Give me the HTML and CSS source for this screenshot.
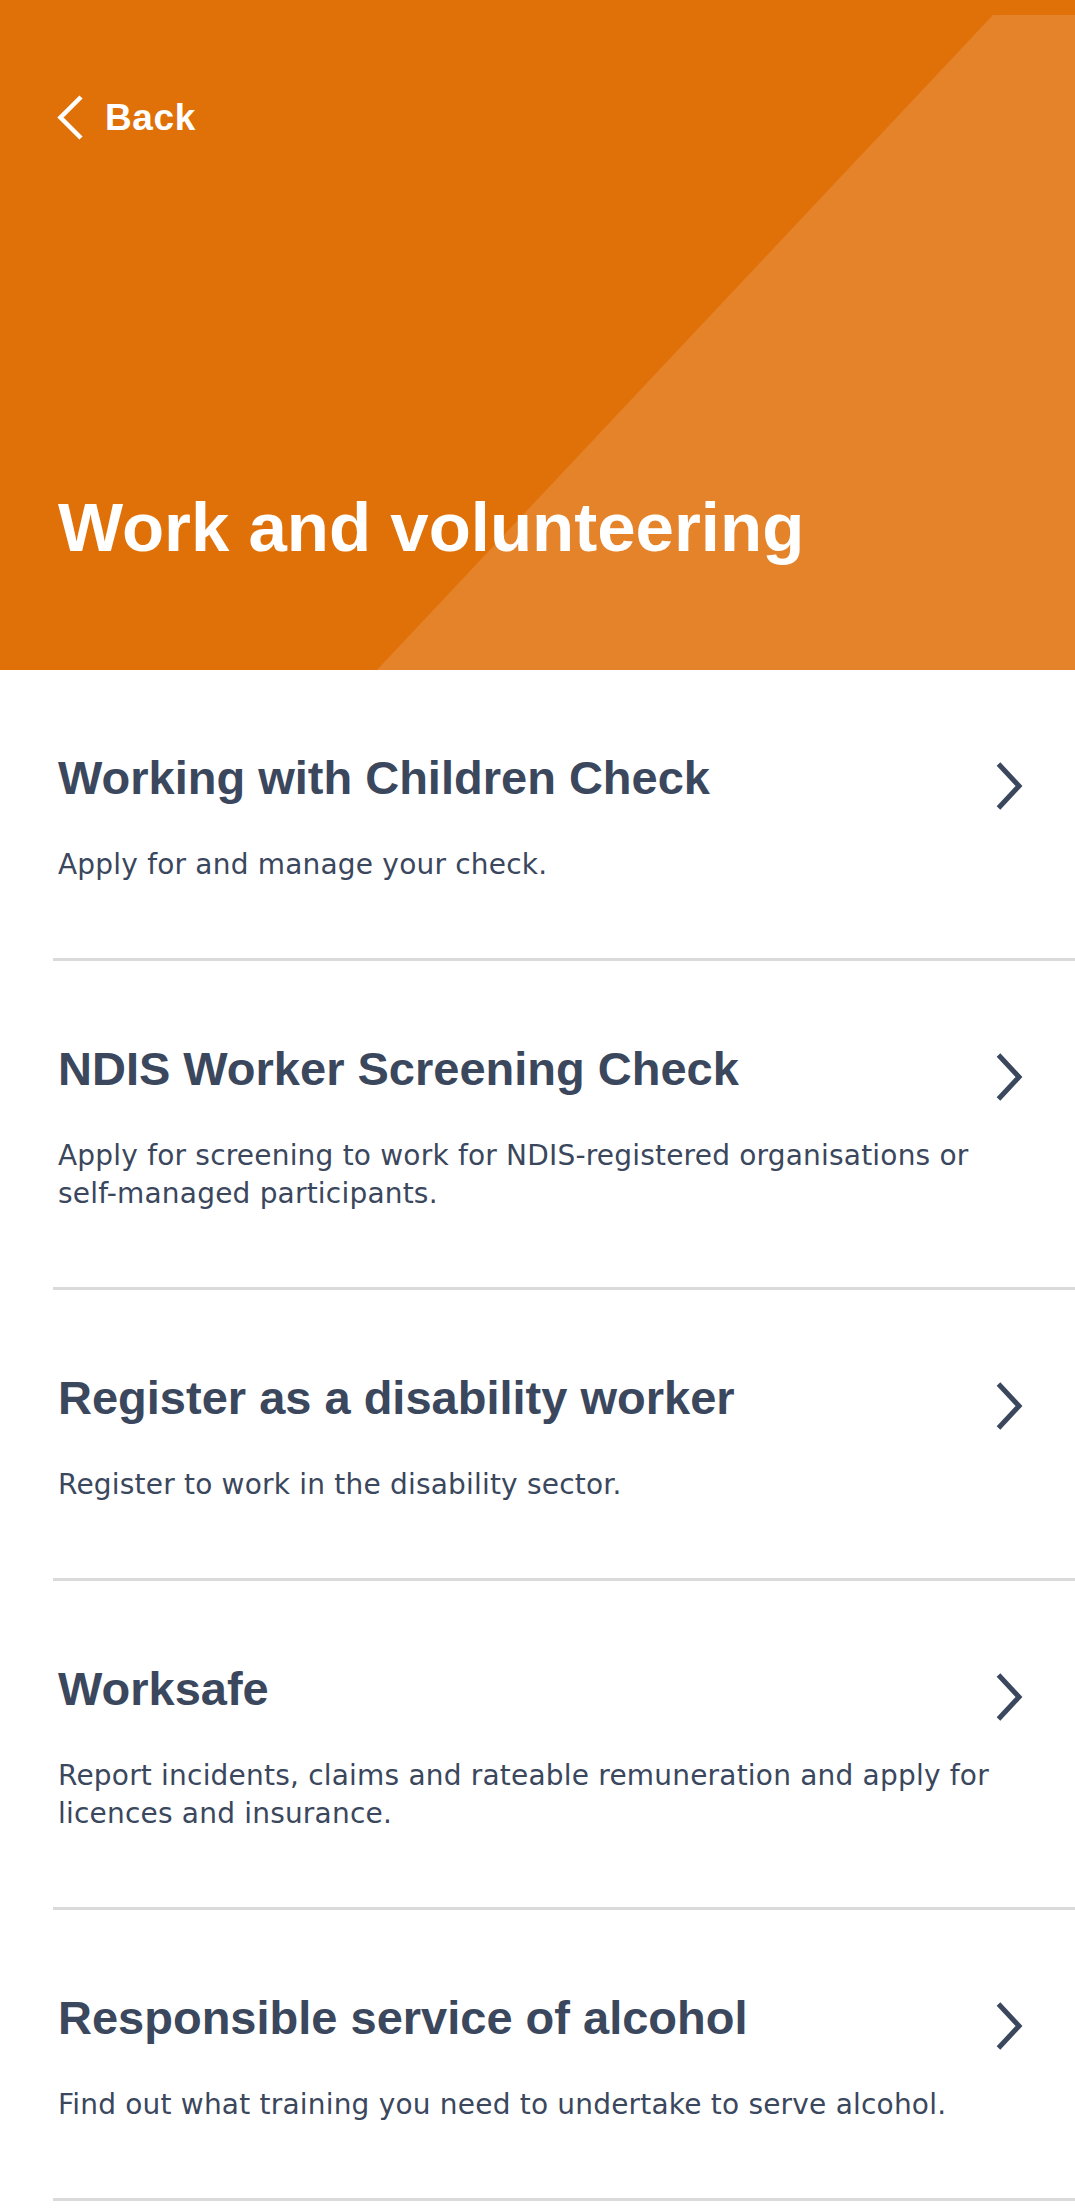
FILE: index.html
```html
<!DOCTYPE html>
<html lang="en">
<head>
<meta charset="utf-8">
<title>Work and volunteering</title>
<link rel="stylesheet" href="styles.css">
</head>
<body>
<header class="hero">
  <a class="back" href="#">
    <svg class="back-icon" width="28" height="48" viewBox="0 0 28 48" aria-hidden="true"><path d="M23 3 L2.5 23.5 L23 44"/></svg>
    <span class="back-label">Back</span>
  </a>
  <h1 class="hero-title">Work and volunteering</h1>
</header>
<ul class="list">
  <li class="item">
    <div class="item-head">
      <h2 class="item-title">Working with Children Check</h2>
      <svg class="chev" width="32" height="52" viewBox="0 0 32 52" aria-hidden="true"><path d="M3.5 4 L24 26 L3.5 48"/></svg>
    </div>
    <p class="item-desc">Apply for and manage your check.</p>
  </li>
  <li class="item">
    <div class="item-head">
      <h2 class="item-title">NDIS Worker Screening Check</h2>
      <svg class="chev" width="32" height="52" viewBox="0 0 32 52" aria-hidden="true"><path d="M3.5 4 L24 26 L3.5 48"/></svg>
    </div>
    <p class="item-desc">Apply for screening to work for NDIS-registered organisations or self-managed participants.</p>
  </li>
  <li class="item">
    <div class="item-head">
      <h2 class="item-title">Register as a disability worker</h2>
      <svg class="chev" width="32" height="52" viewBox="0 0 32 52" aria-hidden="true"><path d="M3.5 4 L24 26 L3.5 48"/></svg>
    </div>
    <p class="item-desc">Register to work in the disability sector.</p>
  </li>
  <li class="item">
    <div class="item-head">
      <h2 class="item-title">Worksafe</h2>
      <svg class="chev" width="32" height="52" viewBox="0 0 32 52" aria-hidden="true"><path d="M3.5 4 L24 26 L3.5 48"/></svg>
    </div>
    <p class="item-desc">Report incidents, claims and rateable remuneration and apply for licences and insurance.</p>
  </li>
  <li class="item">
    <div class="item-head">
      <h2 class="item-title">Responsible service of alcohol</h2>
      <svg class="chev" width="32" height="52" viewBox="0 0 32 52" aria-hidden="true"><path d="M3.5 4 L24 26 L3.5 48"/></svg>
    </div>
    <p class="item-desc">Find out what training you need to undertake to serve alcohol.</p>
  </li>
</ul>
</body>
</html>
```

FILE: styles.css
```css
html, body {
  margin: 0;
  padding: 0;
  background: #ffffff;
}

body {
  font-family: "Liberation Sans", Arial, sans-serif;
  color: #3a475d;
}

.hero {
  position: relative;
  box-sizing: border-box;
  height: 670px;
  padding: 94px 0 0 58px;
  background: #e07109;
  overflow: hidden;
}

.hero::before {
  content: "";
  position: absolute;
  left: 0;
  top: 0;
  right: 0;
  bottom: 0;
  background: #e5832a;
  clip-path: polygon(993px 15px, 100% 15px, 100% 100%, 377px 100%);
}

.back {
  position: relative;
  display: flex;
  align-items: center;
  gap: 19px;
  width: max-content;
  color: #ffffff;
  text-decoration: none;
}

.back-icon {
  display: block;
  overflow: visible;
  flex: none;
}

.back-icon path {
  fill: none;
  stroke: #ffffff;
  stroke-width: 4.5;
  stroke-linejoin: miter;
}

.back-label {
  font-family: "Liberation Sans", Arial, sans-serif;
  font-weight: 700;
  font-size: 37px;
  line-height: 44px;
  letter-spacing: 0.6px;
}

.hero-title {
  position: relative;
  margin: 346px 0 0;
  font-family: "Liberation Sans", Arial, sans-serif;
  font-weight: 700;
  font-size: 69px;
  line-height: 80px;
  color: #ffffff;
  white-space: nowrap;
}

.list {
  margin: 0;
  padding: 0;
  list-style: none;
}

.item {
  margin-left: 53px;
  padding: 80px 0 74px 5px;
  border-bottom: 3px solid #dadada;
}

.item-head {
  display: flex;
  justify-content: space-between;
  align-items: flex-start;
  padding-right: 48px;
}

.item-title {
  margin: 0;
  font-family: "Liberation Sans", Arial, sans-serif;
  font-weight: 700;
  font-size: 47px;
  line-height: 56px;
  color: #3a475d;
  white-space: nowrap;
}

.chev {
  display: block;
  flex: none;
  margin-top: 10px;
  overflow: visible;
}

.chev path {
  fill: none;
  stroke: #3a475d;
  stroke-width: 5;
  stroke-linejoin: miter;
}

.item-desc {
  margin: 34px 0 0;
  padding-right: 60px;
  font-family: "DejaVu Sans", "Liberation Sans", sans-serif;
  font-weight: 400;
  font-size: 28px;
  line-height: 38px;
  letter-spacing: 0.2px;
  color: #3a475d;
}
```
